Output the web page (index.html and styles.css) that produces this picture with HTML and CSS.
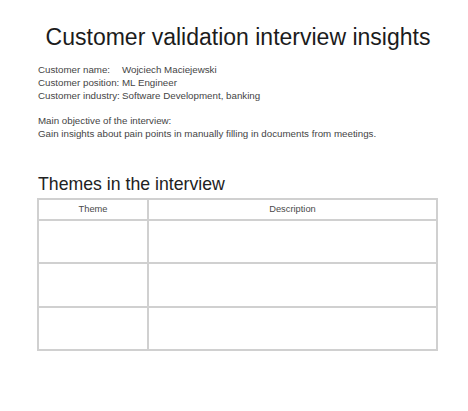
FILE: index.html
```html
<!DOCTYPE html>
<html lang="en">
<head>
<meta charset="utf-8">
<title>Customer validation interview insights</title>
<link rel="stylesheet" href="styles.css">
</head>
<body>
<main class="page">
  <h1 class="title">Customer validation interview insights</h1>
  <div class="info">
    <span class="label">Customer name:</span><span class="value">Wojciech Maciejewski</span>
    <span class="label">Customer position:</span><span class="value">ML Engineer</span>
    <span class="label">Customer industry:</span><span class="value">Software Development, banking</span>
  </div>
  <div class="objective">
    <p class="line">Main objective of the interview:</p>
    <p class="line">Gain insights about pain points in manually filling in documents from meetings.</p>
  </div>
  <h2 class="subtitle">Themes in the interview</h2>
  <div class="table">
    <div class="cell head">Theme</div>
    <div class="cell head">Description</div>
    <div class="cell"></div>
    <div class="cell"></div>
    <div class="cell"></div>
    <div class="cell"></div>
    <div class="cell"></div>
    <div class="cell"></div>
  </div>
</main>
</body>
</html>
```

FILE: styles.css
```css
* { box-sizing: border-box; }
html, body { margin: 0; padding: 0; background: #fff; }
body { font-family: "Liberation Sans", Arial, sans-serif; }

.page {
  width: 468px;
  padding: 24px 30px 0 38px;
}

.title {
  margin: 0;
  font-size: 23px;
  line-height: 26px;
  font-weight: normal;
  color: #1c1c1c;
  text-align: center;
  width: 400px;
}

.info {
  margin-top: 14px;
  display: grid;
  grid-template-columns: 84px 1fr;
  font-size: 9.75px;
  line-height: 12.8px;
  color: #454545;
}

.objective {
  margin-top: 12.8px;
  font-size: 9.75px;
  line-height: 12.8px;
  color: #454545;
}
.line { margin: 0; }

.subtitle {
  margin: 32px 0 0 0;
  font-size: 17.7px;
  line-height: 22px;
  font-weight: normal;
  color: #222;
}

.table {
  margin: 3px 0 0 -1px;
  width: 401px;
  display: grid;
  grid-template-columns: 110px 289px;
  grid-template-rows: 21px 43px 44px 43px;
  border-top: 2px solid #d0d0d0;
  border-left: 2px solid #d0d0d0;
}
.cell {
  border-right: 2px solid #d0d0d0;
  border-bottom: 2px solid #d0d0d0;
}
.head {
  font-size: 9.3px;
  line-height: 19px;
  text-align: center;
  color: #4a4a4a;
}
```
